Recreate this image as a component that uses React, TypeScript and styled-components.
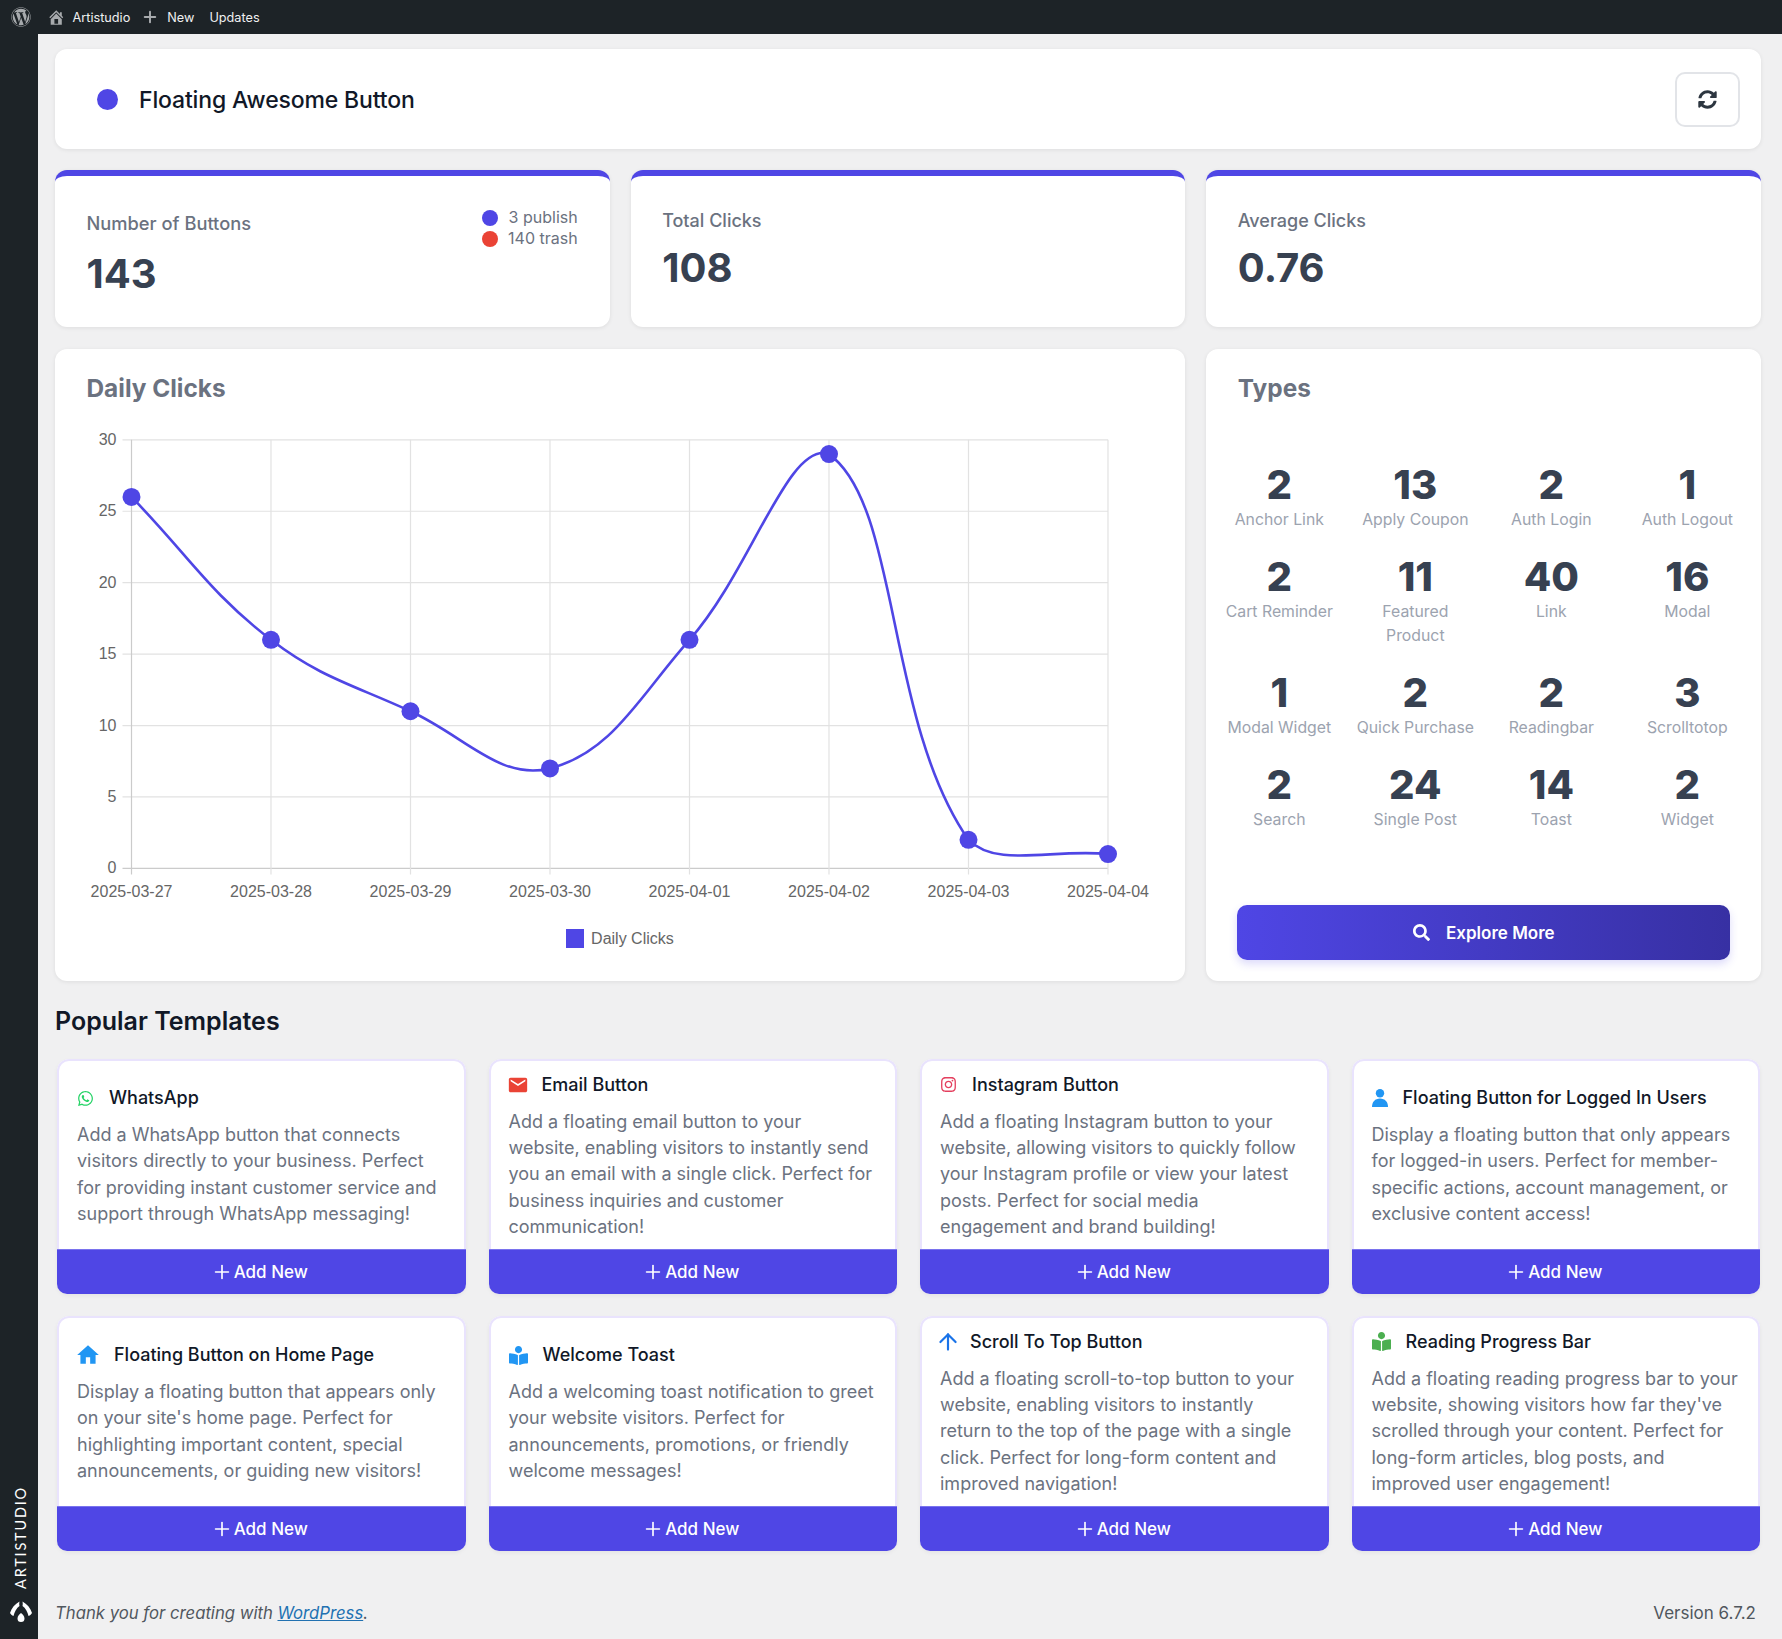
import React, { FC } from 'react';
import styled, { createGlobalStyle } from 'styled-components';
import {
    FaBookReader,
    FaInstagram,
    FaSearch,
    FaSyncAlt,
    FaWhatsapp,
    FaWordpress,
} from 'react-icons/fa';
import { MdEmail, MdHome } from 'react-icons/md';
import { ArrowUp, Plus } from 'lucide-react';

const INDIGO = '#4f46e5';

const GlobalStyle = createGlobalStyle`
    html, body {
        margin: 0;
        padding: 0;
        background: #f0f0f1;
        font-family: Inter, "Liberation Sans", sans-serif;
    }
    * {
        box-sizing: border-box;
    }
`;

const STATS = [
    { label: 'Total Clicks', value: '108' },
    { label: 'Average Clicks', value: '0.76' },
];

const TYPES = [
    ['2', 'Anchor Link'],
    ['13', 'Apply Coupon'],
    ['2', 'Auth Login'],
    ['1', 'Auth Logout'],
    ['2', 'Cart Reminder'],
    ['11', 'Featured Product'],
    ['40', 'Link'],
    ['16', 'Modal'],
    ['1', 'Modal Widget'],
    ['2', 'Quick Purchase'],
    ['2', 'Readingbar'],
    ['3', 'Scrolltotop'],
    ['2', 'Search'],
    ['24', 'Single Post'],
    ['14', 'Toast'],
    ['2', 'Widget'],
];

const AdminHomeIcon: FC = () => (
    <svg width="18.500" height="18.500" viewBox="0 0 20 20" fill="#a7aaad">
        <path d="M16 8.500l1.530 1.530-1.060 1.060L10 4.620l-6.470 6.470-1.060-1.060L10 2.500l4 4v-2h2v4zm-6-2.460l6 5.990V18H4v-5.970zM12 17v-5H8v5h4z" />
    </svg>
);

const UserIcon: FC = () => (
    <svg width="16" height="18" viewBox="0 0 16 18" fill="#2196f3">
        <circle cx="8" cy="4.300" r="4.200" />
        <path d="M0 18c0-5 3-8.500 8-8.500s8 3.500 8 8.500z" />
    </svg>
);

// Material and lucide glyphs carry blank space in their box, so pull it in
function MaterialEmail(props: { size: number; color: string }) {
    return <EmailGlyph {...props} />;
}

function MaterialHome(props: { size: number; color: string }) {
    return <HomeGlyph {...props} />;
}

function ThinArrow(props: { size: number; color: string; strokeWidth: number }) {
    return <ArrowGlyph {...props} />;
}

const TEMPLATES = [
    {
        title: 'WhatsApp',
        icon: <FaWhatsapp size={17} color="#25d366" />,
        text: 'Add a WhatsApp button that connects visitors directly to your business. Perfect for providing instant customer service and support through WhatsApp messaging!',
    },
    {
        title: 'Email Button',
        icon: <MaterialEmail size={22} color="#ea4335" />,
        text: 'Add a floating email button to your website, enabling visitors to instantly send you an email with a single click. Perfect for business inquiries and customer communication!',
    },
    {
        title: 'Instagram Button',
        icon: <FaInstagram size={17} color="#e4405f" />,
        text: 'Add a floating Instagram button to your website, allowing visitors to quickly follow your Instagram profile or view your latest posts. Perfect for social media engagement and brand building!',
    },
    {
        title: 'Floating Button for Logged In Users',
        icon: <UserIcon />,
        text: 'Display a floating button that only appears for logged-in users. Perfect for member-specific actions, account management, or exclusive content access!',
    },
    {
        title: 'Floating Button on Home Page',
        icon: <MaterialHome size={26} color="#2196f3" />,
        text: "Display a floating button that appears only on your site's home page. Perfect for highlighting important content, special announcements, or guiding new visitors!",
    },
    {
        title: 'Welcome Toast',
        icon: <FaBookReader size={19} color="#2196f3" />,
        text: 'Add a welcoming toast notification to greet your website visitors. Perfect for announcements, promotions, or friendly welcome messages!',
    },
    {
        title: 'Scroll To Top Button',
        icon: <ThinArrow size={26} color="#1a73e8" strokeWidth={2} />,
        text: 'Add a floating scroll-to-top button to your website, enabling visitors to instantly return to the top of the page with a single click. Perfect for long-form content and improved navigation!',
    },
    {
        title: 'Reading Progress Bar',
        icon: <FaBookReader size={19} color="#4caf50" />,
        text: "Add a floating reading progress bar to your website, showing visitors how far they've scrolled through your content. Perfect for long-form articles, blog posts, and improved user engagement!",
    },
];

// chart geometry, inside a 1066x480 svg
const CHART_W = 1066;
const CHART_H = 480;
const LEFT = 44.5;
const RIGHT = 1021;
const TOP = 9.8;
const BOTTOM = 438.4;
const DATES = [
    '2025-03-27',
    '2025-03-28',
    '2025-03-29',
    '2025-03-30',
    '2025-04-01',
    '2025-04-02',
    '2025-04-03',
    '2025-04-04',
];
const VALUES = [26, 16, 11, 7, 16, 29, 2, 1];
const TICKS = [0, 5, 10, 15, 20, 25, 30];

const xAt = (i: number) => LEFT + (i * (RIGHT - LEFT)) / 7;
const yAt = (v: number) => BOTTOM - (v * (BOTTOM - TOP)) / 30;
const POINTS = VALUES.map((v, i) => ({ x: xAt(i), y: yAt(v) }));
const capX = (x: number) => Math.min(RIGHT, Math.max(LEFT, x));
const capY = (y: number) => Math.min(BOTTOM, Math.max(TOP, y));

// same spline as a chart.js line with tension 0.4, control points capped to the plot
const buildLine = () => {
    const tension = 0.4;
    const controls = POINTS.map((p, i) => {
        const prev = POINTS[i - 1] || p;
        const next = POINTS[i + 1] || p;
        const d01 = Math.hypot(p.x - prev.x, p.y - prev.y);
        const d12 = Math.hypot(next.x - p.x, next.y - p.y);
        const total = d01 + d12 || 1;
        const fa = (tension * d01) / total;
        const fb = (tension * d12) / total;
        return {
            inX: capX(p.x - fa * (next.x - prev.x)),
            inY: capY(p.y - fa * (next.y - prev.y)),
            outX: capX(p.x + fb * (next.x - prev.x)),
            outY: capY(p.y + fb * (next.y - prev.y)),
        };
    });
    let d = `M${POINTS[0].x} ${POINTS[0].y}`;
    for (let i = 1; i < POINTS.length; i++) {
        const a = controls[i - 1];
        const b = controls[i];
        d += ` C${a.outX} ${a.outY} ${b.inX} ${b.inY} ${POINTS[i].x} ${POINTS[i].y}`;
    }
    return d;
};

const DailyChart: FC = () => (
    <ChartSvg viewBox={`0 0 ${CHART_W} ${CHART_H}`}>
        {TICKS.map((t) => (
            <g key={t}>
                <line x1={LEFT - 9} x2={RIGHT} y1={yAt(t)} y2={yAt(t)} stroke={t === 0 ? '#cbcbcb' : '#e2e2e2'} strokeWidth={1.2} />
                <text x={LEFT - 15} y={yAt(t) + 5} textAnchor="end" fontSize={16} fill="#666" fontFamily="Liberation Sans">
                    {t}
                </text>
            </g>
        ))}
        {DATES.map((date, i) => (
            <g key={date}>
                <line x1={xAt(i)} x2={xAt(i)} y1={TOP} y2={BOTTOM + 6} stroke={i === 0 ? '#cbcbcb' : '#e2e2e2'} strokeWidth={1.2} />
                <text x={xAt(i)} y={BOTTOM + 29} textAnchor="middle" fontSize={16} fill="#666" fontFamily="Liberation Sans">
                    {date}
                </text>
            </g>
        ))}
        <path d={buildLine()} fill="none" stroke={INDIGO} strokeWidth={2.6} />
        {POINTS.map((p) => (
            <circle key={p.x} cx={p.x} cy={p.y} r={9} fill={INDIGO} />
        ))}
    </ChartSvg>
);

const App: FC = () => (
    <Page>
        <GlobalStyle />
        <AdminBar>
            <FaWordpress size={20} color="#a7aaad" />
            <AdminItem $gap={7} $left={16}>
                <AdminHomeIcon />
                Artistudio
            </AdminItem>
            <AdminItem $gap={8} $left={11}>
                <Plus size={18} color="#a7aaad" strokeWidth={2.6} />
                New
            </AdminItem>
            <AdminItem $gap={0} $left={15}>
                Updates
            </AdminItem>
        </AdminBar>
        <Body>
            <Sidebar>
                <SidebarLabel>ARTISTUDIO</SidebarLabel>
                <svg width="22" height="21" viewBox="0 0 22 21" fill="#fff">
                    <path d="M9.500 0.500C5 3 1.500 7 0 12C0.500 13 2 14.500 3.500 15C4.500 11 6.500 7 9.500 5C9 3.500 9.300 1.500 9.500 0.500Z" />
                    <path d="M12.500 0.500C17 3 20.500 7 22 12C21.500 13 20 14.500 18.500 15C17.500 11 15.500 7 12.500 5C13 3.500 12.700 1.500 12.500 0.500Z" />
                    <path d="M11 12c1.500 1 3.500 3 3.500 5.500a3.500 3.500 0 0 1-7 0c0-2.500 2-4.500 3.500-5.500z" />
                </svg>
            </Sidebar>
            <Main>
                <HeaderCard>
                    <HeaderDot />
                    <HeaderTitle>Floating Awesome Button</HeaderTitle>
                    <RefreshButton>
                        <FaSyncAlt size={19} color="#2d3640" />
                    </RefreshButton>
                </HeaderCard>
                <StatRow>
                    <StatCard>
                        <StatTop>
                            <div>
                                <StatLabel $first>Number of Buttons</StatLabel>
                                <StatValue $first>143</StatValue>
                            </div>
                            <StatLegend>
                                <LegendRow>
                                    <LegendDot $color={INDIGO} />3 publish
                                </LegendRow>
                                <LegendRow>
                                    <LegendDot $color="#ea4335" />140 trash
                                </LegendRow>
                            </StatLegend>
                        </StatTop>
                    </StatCard>
                    {STATS.map((stat) => (
                        <StatCard key={stat.label}>
                            <StatLabel>{stat.label}</StatLabel>
                            <StatValue>{stat.value}</StatValue>
                        </StatCard>
                    ))}
                </StatRow>
                <ChartRow>
                    <ChartCard>
                        <PanelTitle>Daily Clicks</PanelTitle>
                        <DailyChart />
                        <ChartLegend>
                            <LegendSwatch />
                            Daily Clicks
                        </ChartLegend>
                    </ChartCard>
                    <TypesCard>
                        <TypesTitle>Types</TypesTitle>
                        <TypesGrid>
                            {TYPES.map(([count, name]) => (
                                <TypeItem key={name}>
                                    <TypeCount>{count}</TypeCount>
                                    <TypeName>{name}</TypeName>
                                </TypeItem>
                            ))}
                        </TypesGrid>
                        <ExploreButton>
                            <FaSearch size={17} />
                            Explore More
                        </ExploreButton>
                    </TypesCard>
                </ChartRow>
                <SectionTitle>Popular Templates</SectionTitle>
                <TemplateGrid>
                    {TEMPLATES.map((template) => (
                        <TemplateCard key={template.title}>
                            <TemplateBody>
                                <TemplateHead>
                                    {template.icon}
                                    {template.title}
                                </TemplateHead>
                                <TemplateText>{template.text}</TemplateText>
                            </TemplateBody>
                            <AddButton>
                                <AddGlyph size={22} strokeWidth={1.800} />
                                Add New
                            </AddButton>
                        </TemplateCard>
                    ))}
                </TemplateGrid>
                <Footer>
                    <FooterThanks>
                        Thank you for creating with <a href="#wp">WordPress</a>.
                    </FooterThanks>
                    <span>Version 6.7.2</span>
                </Footer>
            </Main>
        </Body>
    </Page>
);

const EmailGlyph = styled(MdEmail)`
    margin: 0 -2px;
    flex: none;
`;

const HomeGlyph = styled(MdHome)`
    margin: 0 -2px;
    flex: none;
`;

const ArrowGlyph = styled(ArrowUp)`
    margin: 0 -5.500px;
    flex: none;
`;

const AddGlyph = styled(Plus)`
    margin: 0 -4px;
`;

const Page = styled.div`
    width: 1782px;
    height: 1639px;
    overflow: hidden;
    display: flex;
    flex-direction: column;
`;

const AdminBar = styled.div`
    height: 34px;
    flex: none;
    display: flex;
    align-items: center;
    padding-left: 11px;
    background: #1d2327;
    color: #f0f0f1;
    font-size: 12.700px;
`;

const AdminItem = styled.div<{ $gap: number; $left: number }>`
    display: flex;
    align-items: center;
    gap: ${({ $gap }) => $gap}px;
    margin-left: ${({ $left }) => $left}px;
`;

const Body = styled.div`
    flex: 1;
    display: flex;
    min-height: 0;
`;

const Sidebar = styled.aside`
    width: 38px;
    flex: none;
    background: #1d2327;
    display: flex;
    flex-direction: column;
    align-items: center;
    justify-content: flex-end;
    gap: 12px;
    padding: 0 0 17px 3px;
`;

const SidebarLabel = styled.div`
    writing-mode: vertical-rl;
    transform: rotate(180deg);
    color: #fff;
    font-family: Lato, sans-serif;
    font-size: 14.500px;
    letter-spacing: 1.800px;
`;

const Main = styled.main`
    flex: 1;
    min-width: 0;
    padding: 15px 21px 0 17px;
`;

const cardStyle = `
    background: #fff;
    border-radius: 12px;
    box-shadow: 0 1px 4px rgba(0, 0, 0, 0.08);
`;

const HeaderCard = styled.header`
    ${cardStyle}
    height: 100px;
    display: flex;
    align-items: center;
    padding: 0 21px 0 42px;
`;

const HeaderDot = styled.span`
    width: 21px;
    height: 21px;
    border-radius: 50%;
    background: ${INDIGO};
`;

const HeaderTitle = styled.h1`
    flex: 1;
    margin: 2px 0 0 21px;
    color: #111827;
    font-size: 23px;
    font-weight: 500;
    letter-spacing: -0.150px;
`;

const RefreshButton = styled.button`
    width: 65px;
    height: 55px;
    display: flex;
    align-items: center;
    justify-content: center;
    background: #fff;
    border: 2px solid #e2e4e8;
    border-radius: 10px;
`;

const StatRow = styled.section`
    margin-top: 21px;
    display: grid;
    grid-template-columns: repeat(3, minmax(0, 1fr));
    gap: 21px;
`;

const StatCard = styled.div`
    ${cardStyle}
    height: 157px;
    padding: 0 32px 0 31.500px;
    border-top: 6px solid ${INDIGO};
`;

const StatTop = styled.div`
    display: flex;
    justify-content: space-between;
    align-items: flex-start;
`;

const StatLabel = styled.div<{ $first?: boolean }>`
    margin-top: ${({ $first }) => ($first ? 34 : 32)}px;
    color: #6b7280;
    font-size: ${({ $first }) => ($first ? 18.300 : 18)}px;
    font-weight: 500;
    line-height: 26px;
`;

const StatValue = styled.div<{ $first?: boolean }>`
    margin-top: ${({ $first }) => ($first ? 14 : 10)}px;
    color: #374151;
    font-size: 40px;
    font-weight: 700;
    line-height: 48px;
`;

const StatLegend = styled.div`
    margin-top: 31px;
    color: #6b7280;
    font-size: 16px;
    line-height: 21px;
`;

const LegendRow = styled.div`
    display: flex;
    align-items: center;
    justify-content: flex-end;
    gap: 10.500px;
`;

const LegendDot = styled.span<{ $color: string }>`
    width: 16px;
    height: 16px;
    border-radius: 50%;
    background: ${({ $color }) => $color};
`;

const ChartRow = styled.section`
    margin-top: 22px;
    display: grid;
    grid-template-columns: repeat(3, minmax(0, 1fr));
    gap: 21px;
`;

const ChartCard = styled.div`
    ${cardStyle}
    grid-column: span 2;
    height: 632px;
    padding: 24px 32px 0 31.500px;
`;

const PanelTitle = styled.h2`
    margin: 0 0 27px;
    color: #6b7280;
    font-size: 24.400px;
    font-weight: 700;
    line-height: 30px;
`;

const ChartSvg = styled.svg`
    display: block;
    width: ${CHART_W}px;
    height: ${CHART_H}px;
`;

const ChartLegend = styled.div`
    margin-top: 19px;
    display: flex;
    justify-content: center;
    align-items: center;
    gap: 7px;
    color: #666;
    font-family: "Liberation Sans", sans-serif;
    font-size: 16px;
    line-height: 19px;
`;

const LegendSwatch = styled.span`
    width: 18px;
    height: 19px;
    background: ${INDIGO};
`;

const TypesCard = styled.div`
    ${cardStyle}
    height: 632px;
    padding: 24px 13px 0;
`;

const TypesTitle = styled(PanelTitle)`
    margin: 0 0 58px 18.500px;
`;

const TypesGrid = styled.div`
    height: 370px;
    display: grid;
    grid-template-columns: repeat(4, 120px);
    grid-auto-rows: min-content;
    column-gap: 16px;
    row-gap: 21px;
`;

const TypeItem = styled.div`
    text-align: center;
`;

const TypeCount = styled.div`
    color: #374151;
    font-size: 40px;
    font-weight: 800;
    line-height: 47px;
`;

const TypeName = styled.div`
    color: #9ca3af;
    font-size: 15.800px;
    line-height: 24px;
`;

const ExploreButton = styled.button`
    width: 493px;
    height: 55px;
    margin: 74px 18px 0;
    display: flex;
    align-items: center;
    justify-content: center;
    gap: 16px;
    border: 0;
    border-radius: 10px;
    background: linear-gradient(90deg, ${INDIGO}, #3730a3);
    box-shadow: 0 4px 8px rgba(79, 70, 229, 0.2);
    color: #fff;
    font-family: inherit;
    font-size: 17px;
    font-weight: 600;
`;

const SectionTitle = styled.h2`
    margin: 24px 0 0;
    color: #111827;
    font-size: 25px;
    font-weight: 600;
    line-height: 32px;
`;

const TemplateGrid = styled.section`
    margin: 22px 1px 0 2px;
    display: grid;
    grid-template-columns: repeat(4, minmax(0, 1fr));
    column-gap: 23px;
    row-gap: 22px;
`;

const TemplateCard = styled.article`
    height: 235px;
    display: flex;
    flex-direction: column;
    border-radius: 12px;
    background: #fff;
    box-shadow: 0 2px 4px rgba(0, 0, 0, 0.05);
`;

const TemplateBody = styled.div`
    flex: 1;
    min-height: 0;
    display: flex;
    flex-direction: column;
    justify-content: center;
    padding: 2px 18px 0;
    border: 2px solid #e9e3fd;
    border-bottom: 0;
    border-radius: 12px 12px 0 0;
`;

const TemplateHead = styled.h3`
    margin: 0 0 11px;
    display: flex;
    align-items: center;
    gap: 15px;
    color: #111827;
    font-size: 18px;
    font-weight: 500;
    line-height: 26px;
`;

const TemplateText = styled.p`
    margin: 0;
    color: #6b7280;
    font-size: 18px;
    line-height: 26.200px;
`;

const AddButton = styled.button`
    height: 45px;
    flex: none;
    display: flex;
    align-items: center;
    justify-content: center;
    gap: 5px;
    border: 0;
    border-top: 1px solid #7a73ee;
    border-radius: 0 0 10px 10px;
    background: ${INDIGO};
    color: #fff;
    font-family: inherit;
    font-size: 17px;
    font-weight: 500;
`;

const Footer = styled.footer`
    margin-top: 50px;
    display: flex;
    justify-content: space-between;
    padding-right: 5px;
    color: #50575e;
    font-size: 17px;
    line-height: 24px;
`;

const FooterThanks = styled.em`
    font-size: 16.700px;

    a {
        color: #2271b1;
    }
`;

export default App;
